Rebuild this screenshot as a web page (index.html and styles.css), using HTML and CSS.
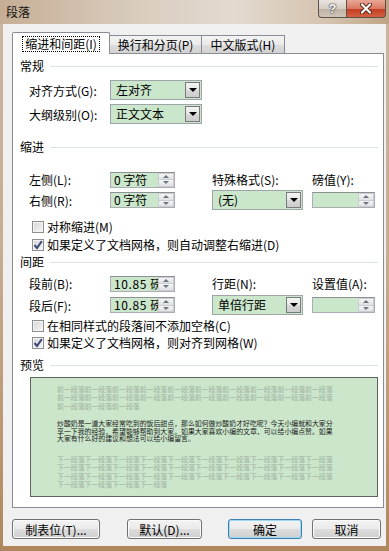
FILE: index.html
```html
<!DOCTYPE html>
<html lang="zh-CN">
<head>
    <meta charset="UTF-8">
    <meta name="viewport" content="width=device-width, initial-scale=1.0">
    <title>段落</title>
    <link rel="stylesheet" href="styles.css">
</head>
<body>
<div class="window">
    <div class="titlebar">
        <span class="title">段落</span>
        <div class="caption">
            <span class="cap-btn help">?</span>
            <span class="cap-btn close">
                <svg width="14" height="11" viewBox="0 0 14 11">
                    <path d="M3 1.5 L11 9.5 M11 1.5 L3 9.5" stroke="#5a2418" stroke-width="4" stroke-linecap="round"/>
                    <path d="M3 1.5 L11 9.5 M11 1.5 L3 9.5" stroke="#fff" stroke-width="2.2" stroke-linecap="round"/>
                </svg>
            </span>
        </div>
    </div>

    <div class="client">
        <div class="tabs">
            <div class="tab tab-indent active"><span class="focus">缩进和间距(I)</span></div>
            <div class="tab tab-break">换行和分页(P)</div>
            <div class="tab tab-asian">中文版式(H)</div>
        </div>

        <div class="panel">
            <div class="group-title">常规</div>
            <div class="field-row first">
                <span class="field-label">对齐方式(G):</span>
                <div class="select"><span class="select-val">左对齐</span><span class="select-btn"></span></div>
            </div>
            <div class="field-row">
                <span class="field-label">大纲级别(O):</span>
                <div class="select"><span class="select-val">正文文本</span><span class="select-btn"></span></div>
            </div>

            <div class="group-title indent-title">缩进</div>
            <div class="grid indent-grid">
                <span>左侧(L):</span>
                <div class="spin"><span class="spin-val">0 字符</span><span class="spin-btns"><i class="up"></i><i class="down"></i></span></div>
                <span></span>
                <span>特殊格式(S):</span>
                <span>磅值(Y):</span>

                <span>右侧(R):</span>
                <div class="spin"><span class="spin-val">0 字符</span><span class="spin-btns"><i class="up"></i><i class="down"></i></span></div>
                <span></span>
                <div class="select"><span class="select-val">(无)</span><span class="select-btn"></span></div>
                <div class="spin spin-wide"><span class="spin-val"></span><span class="spin-btns"><i class="up"></i><i class="down"></i></span></div>
            </div>
            <label class="check check-first"><span class="box"></span>对称缩进(M)</label>
            <label class="check"><span class="box checked"><svg width="10" height="10" viewBox="0 0 10 10"><path d="M1.5 5 L4 8 L8.8 1.2" fill="none" stroke="#3b4c78" stroke-width="2"/></svg></span>如果定义了文档网格，则自动调整右缩进(D)</label>

            <div class="group-title spacing-title">间距</div>
            <div class="grid spacing-grid">
                <span>段前(B):</span>
                <div class="spin"><span class="spin-val num">10.85 磅</span><span class="spin-btns"><i class="up"></i><i class="down"></i></span></div>
                <span></span>
                <span>行距(N):</span>
                <span>设置值(A):</span>

                <span>段后(F):</span>
                <div class="spin"><span class="spin-val num">10.85 磅</span><span class="spin-btns"><i class="up"></i><i class="down"></i></span></div>
                <span></span>
                <div class="select"><span class="select-val">单倍行距</span><span class="select-btn"></span></div>
                <div class="spin spin-wide"><span class="spin-val"></span><span class="spin-btns"><i class="up"></i><i class="down"></i></span></div>
            </div>
            <label class="check check-first"><span class="box"></span>在相同样式的段落间不添加空格(C)</label>
            <label class="check check-tight"><span class="box checked"><svg width="10" height="10" viewBox="0 0 10 10"><path d="M1.5 5 L4 8 L8.8 1.2" fill="none" stroke="#3b4c78" stroke-width="2"/></svg></span>如果定义了文档网格，则对齐到网格(W)</label>

            <div class="group-title preview-title">预览</div>
            <div class="preview">
                <div class="pv-gray">
                    <div>前一段落前一段落前一段落前一段落前一段落前一段落前一段落前一段落前一段落前一段落</div>
                    <div>前一段落前一段落前一段落前一段落前一段落前一段落前一段落前一段落前一段落前一段落</div>
                    <div>前一段落前一段落前一段落</div>
                </div>
                <div class="pv-text">
                    <div>炒酸奶是一道大家经常吃到的饭后甜点，那么如何做炒酸奶才好吃呢？今天小编就和大家分</div>
                    <div>享一下我的经验，希望能够帮助到大家。如果大家喜欢小编的文章，可以给小编点赞。如果</div>
                    <div>大家有什么好的建议和想法可以给小编留言。</div>
                </div>
                <div class="pv-gray pv-next">
                    <div>下一段落下一段落下一段落下一段落下一段落下一段落下一段落下一段落下一段落下一段落</div>
                    <div>下一段落下一段落下一段落下一段落下一段落下一段落下一段落下一段落下一段落下一段落</div>
                    <div>下一段落下一段落下一段落下一段落下一段落下一段落下一段落下一段落下一段落下一段落</div>
                    <div>下一段落下一段落下一段落下一段落</div>
                </div>
            </div>
        </div>

        <div class="buttons">
            <span class="btn btn-tabs">制表位(T)...</span>
            <span class="btn btn-default">默认(D)...</span>
            <span class="btn btn-ok">确定</span>
            <span class="btn btn-cancel">取消</span>
        </div>
    </div>
</div>
</body>
</html>
```

FILE: styles.css
```css
* {
    box-sizing: border-box;
}
body {
    margin: 0;
    font-family: "Noto Sans CJK SC", "Liberation Sans", sans-serif;
    font-size: 12px;
    color: #000;
}
.window {
    width: 389px;
    height: 551px;
    display: flex;
    flex-direction: column;
    padding: 0 3px 5px 3px;
    background: linear-gradient(to bottom, #cbb6a0 0, #c6ad93 45%, #bb9670 80%, #b0875d 100%);
}

/* title bar */
.titlebar {
    height: 24px;
    margin: 0 -3px;
    padding: 0 3px 0 6px;
    display: flex;
    justify-content: space-between;
    background: linear-gradient(to right, #c6ae95 0, #d9ccbe 35%, #e3dad0 60%, #d4c2ad 85%, #bea486 100%);
}
.title {
    line-height: 24px;
    color: #111;
}
.caption {
    display: flex;
    align-self: flex-start;
}
.cap-btn {
    height: 18px;
    display: flex;
    align-items: center;
    justify-content: center;
    border: 1px solid #5c524a;
    border-top: none;
}
.help {
    width: 29px;
    border-radius: 0 0 0 4px;
    background: linear-gradient(to bottom, #ebe5df 0, #d6cdc4 50%, #bdb1a5 51%, #cfc4b8 100%);
    color: #fff;
    font-family: "Liberation Sans", sans-serif;
    font-weight: bold;
    font-size: 13px;
    text-shadow: 0 0 1px #333, 0 0 1px #333, 0 0 2px #555;
}
.close {
    width: 39px;
    border-left: none;
    border-radius: 0 0 4px 0;
    background: linear-gradient(to bottom, #e9a796 0, #d97a63 50%, #c33d24 51%, #d4603f 100%);
}

/* client area */
.client {
    flex: 1;
    background: #f0f0f0;
    padding: 8px 2px 0 9px;
}
.tabs {
    height: 21px;
    display: flex;
    align-items: flex-end;
    position: relative;
    z-index: 1;
}
.tab {
    height: 18px;
    display: flex;
    align-items: center;
    justify-content: center;
    border: 1px solid #898c95;
    border-bottom: none;
    margin-left: -1px;
    background: linear-gradient(to bottom, #f3f3f3 0, #ebebeb 50%, #dddddd 51%, #d2d2d2 100%);
    line-height: 16px;
}
.tab-indent {
    width: 98px;
    margin-left: 0;
}
.tab-break {
    width: 93px;
}
.tab-asian {
    width: 84px;
}
.tab.active {
    height: 22px;
    margin-bottom: -1px;
    background: #fff;
    border-radius: 2px 2px 0 0;
}
.focus {
    border: 1px dotted #000;
    padding: 0 2px;
    height: 16px;
    line-height: 14px;
}

.panel {
    height: 455px;
    border: 1px solid #898c95;
    background: #fff;
    padding: 5px 5px 0 7px;
}
.group-title {
    height: 14px;
    line-height: 14px;
    display: flex;
    align-items: center;
}
.group-title::after {
    content: "";
    flex: 1;
    height: 1px;
    margin-left: 6px;
    background: #dde2e6;
}
.indent-title {
    margin-top: 16px;
}
.spacing-title {
    margin-top: 3px;
}
.preview-title {
    margin-top: 8px;
}

.field-row {
    display: flex;
    align-items: center;
    height: 20px;
    margin: 4px 0 0 9px;
}
.field-row.first {
    margin-top: 7px;
}
.field-label {
    width: 81px;
}

/* dropdowns */
.select {
    width: 92px;
    height: 20px;
    display: flex;
    align-items: center;
    padding: 1px;
    border: 1px solid #a0a3a9;
    background: #cbe7cb;
}
.select-val {
    flex: 1;
    padding-left: 4px;
    line-height: 16px;
}
.select-btn {
    width: 15px;
    height: 16px;
    display: flex;
    align-items: center;
    justify-content: center;
    border: 1px solid #7a7a7a;
    background: linear-gradient(to bottom, #f4f4f4 0, #e6e6e6 50%, #d8d8d8 51%, #cdcdcd 100%);
}
.select-btn::after {
    content: "";
    border-left: 4px solid transparent;
    border-right: 4px solid transparent;
    border-top: 4px solid #000;
}

/* spin boxes */
.spin {
    width: 65px;
    height: 16px;
    display: flex;
    border: 1px solid #abadb3;
    border-top-color: #8e9095;
    background: #cbe7cb;
}
.spin-wide {
    width: 63px;
}
.spin-val {
    flex: 1;
    padding-left: 3px;
    line-height: 14px;
    overflow: hidden;
    white-space: nowrap;
}
.spin-val.num {
    letter-spacing: 0.6px;
}
.spin-btns {
    width: 16px;
    display: flex;
    flex-direction: column;
    background: #fff;
}
.spin-btns i {
    flex: 1;
    display: flex;
    align-items: center;
    justify-content: center;
    border: 1px solid #c9ccd1;
    background: linear-gradient(to bottom, #f5f5f5, #dfe1e4);
}
.spin-btns i.down {
    border-top: none;
}
.spin-btns i.up::after {
    content: "";
    border-left: 3px solid transparent;
    border-right: 3px solid transparent;
    border-bottom: 3px solid #6d7480;
}
.spin-btns i.down::after {
    content: "";
    border-left: 3px solid transparent;
    border-right: 3px solid transparent;
    border-top: 3px solid #6d7480;
}

.grid {
    display: grid;
    grid-template-columns: 81px 65px 37px 100px 63px;
    grid-template-rows: 15px 20px;
    row-gap: 3px;
    align-items: center;
    margin-left: 9px;
    line-height: 15px;
}
.indent-grid {
    margin-top: 18px;
}
.spacing-grid {
    margin-top: 7px;
    row-gap: 4px;
}
.grid .select {
    width: 91px;
}

/* checkboxes */
.check {
    display: flex;
    align-items: center;
    height: 14px;
    margin: 4px 0 0 12px;
    line-height: 14px;
    white-space: nowrap;
}
.check-first {
    margin-top: 10px;
}
.spacing-grid + .check-first {
    margin-top: 4px;
}
.check-tight {
    margin-top: 3px;
}
.box {
    width: 12px;
    height: 12px;
    margin-right: 3px;
    border: 1px solid #8e8f8f;
    box-shadow: inset 0 0 0 1px #f4f4f4;
    background: linear-gradient(135deg, #d4d4d4, #f7f7f7);
    display: flex;
    align-items: center;
    justify-content: center;
}

/* preview */
.preview {
    height: 120px;
    width: 348px;
    margin: 5px 0 0 10px;
    padding: 7px 0 0 26px;
    border: 1px solid #5f625f;
    background: #cbe6cb;
    overflow: hidden;
}
.preview div div {
    width: 279px;
    white-space: nowrap;
    overflow: hidden;
}
.pv-gray {
    font-size: 6.9px;
    line-height: 8.4px;
    color: #9fb09f;
}
.pv-text {
    margin-top: 10px;
    font-size: 6.9px;
    line-height: 7.6px;
    color: #1a1a1a;
}
.pv-next {
    margin-top: 12px;
}

/* buttons */
.buttons {
    display: flex;
    margin-top: 11px;
}
.btn {
    height: 20px;
    display: flex;
    align-items: center;
    justify-content: center;
    border: 1px solid #707070;
    border-radius: 3px;
    box-shadow: inset 0 0 0 1px #fbfbfb;
    background: linear-gradient(to bottom, #f2f2f2 0, #ebebeb 50%, #dddddd 51%, #cfcfcf 100%);
}
.btn-tabs {
    width: 88px;
}
.btn-default {
    width: 75px;
    margin-left: 27px;
}
.btn-ok {
    width: 74px;
    margin-left: 26px;
    border-color: #3c7fb1;
    box-shadow: inset 0 0 0 1px #9bd9f4;
}
.btn-cancel {
    width: 69px;
    margin-left: 10px;
}
```
